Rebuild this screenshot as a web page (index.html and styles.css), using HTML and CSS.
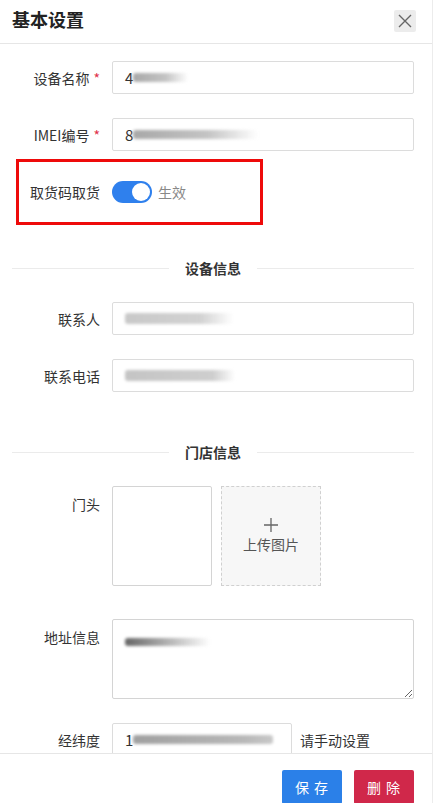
FILE: index.html
```html
<!DOCTYPE html>
<html lang="zh">
<head>
<meta charset="utf-8">
<link rel="stylesheet" href="styles.css">
</head>
<body>
<div class="dialog">
  <div class="header">
    <div class="title">基本设置</div>
    <div class="close">
      <svg width="14" height="14" viewBox="0 0 14 14"><path d="M1 1L13 13M13 1L1 13" stroke="#666" stroke-width="1.4" fill="none"/></svg>
    </div>
  </div>
  <div class="body">
    <div class="row">
      <div class="label">设备名称<span class="req">*</span></div>
      <div class="input"><span class="val">4</span><span class="blur b1"></span></div>
    </div>
    <div class="row">
      <div class="label">IMEI编号<span class="req">*</span></div>
      <div class="input"><span class="val">8</span><span class="blur b2"></span></div>
    </div>
    <div class="row toggle-row">
      <div class="label">取货码取货</div>
      <div class="switch"><span class="knob"></span></div>
      <span class="switch-text">生效</span>
      <div class="mark"></div>
    </div>
    <div class="divider"><span>设备信息</span></div>
    <div class="row">
      <div class="label">联系人</div>
      <div class="input"><span class="blur b3"></span></div>
    </div>
    <div class="row">
      <div class="label">联系电话</div>
      <div class="input"><span class="blur b4"></span></div>
    </div>
    <div class="divider"><span>门店信息</span></div>
    <div class="row top-row pic-row">
      <div class="label">门头</div>
      <div class="pics">
        <div class="pic"></div>
        <div class="upload">
          <svg class="plus" width="14" height="14" viewBox="0 0 14 14"><path d="M7 0V14M0 7H14" stroke="#666" stroke-width="1.3" fill="none"/></svg>
          <span class="up-text">上传图片</span>
        </div>
      </div>
    </div>
    <div class="row top-row addr">
      <div class="label">地址信息</div>
      <div class="textarea"><span class="blur b5"></span></div>
    </div>
    <div class="row">
      <div class="label">经纬度</div>
      <div class="input short"><span class="val">1</span><span class="blur b6"></span></div>
      <span class="hint">请手动设置</span>
    </div>
  </div>
  <div class="footer">
    <button class="btn save">保 存</button>
    <button class="btn del">删 除</button>
  </div>
</div>
</body>
</html>
```
FILE: styles.css
```css
* { box-sizing: border-box; }
html, body { margin: 0; padding: 0; background: #fff; }
body {
  font-family: "Noto Sans CJK SC", "Noto Sans", "Liberation Sans", sans-serif;
  font-size: 14px;
  color: #333;
  width: 438px;
  height: 803px;
  overflow: hidden;
}
.dialog {
  width: 433px;
  height: 803px;
  display: flex;
  flex-direction: column;
  border-right: 1px solid #ececec;
}
.header {
  height: 44px;
  flex: none;
  display: flex;
  align-items: center;
  justify-content: space-between;
  padding: 0 16px 8px 12px;
  border-bottom: 1px solid #e6e6e6;
}
.title { font-size: 18px; font-weight: 600; color: #222; line-height: 24px; margin-top: 2px; }
.close {
  width: 22px; height: 22px;
  background: #ececec;
  border-radius: 2px;
  display: flex; align-items: center; justify-content: center;
  margin-top: 6px;
}
.body {
  flex: 1;
  overflow: hidden;
  padding: 17px 18px 0 12px;
}
.row {
  display: flex;
  align-items: center;
  margin-bottom: 24px;
  position: relative;
}
.label {
  width: 88px;
  flex: none;
  text-align: right;
  margin-right: 12px;
  color: #333;
  white-space: nowrap;
}
.req { color: #e0314b; margin-left: 4px; }
.input {
  flex: 1;
  height: 33px;
  border: 1px solid #dcdcdc;
  border-radius: 2px;
  display: flex;
  align-items: center;
  padding: 0 12px;
  color: #333;
}
.input.short { flex: none; width: 180px; }
.val { font-size: 15px; }
.blur {
  display: inline-block;
  height: 9px;
  background: linear-gradient(90deg, #a8a8a8, #c4c4c4 60%, rgba(200,200,200,0));
  filter: blur(1.6px);
  border-radius: 3px;
}
.b1 { width: 55px; }
.b2 { width: 125px; }
.b3 { width: 108px; height: 11px; background: linear-gradient(90deg, #c8c8c8, #d2d2d2 70%, rgba(220,220,220,0)); }
.b4 { width: 110px; height: 11px; background: linear-gradient(90deg, #c4c4c4, #cecece 80%, rgba(220,220,220,0)); }
.b5 { width: 85px; height: 8px; background: linear-gradient(90deg, #666, #aaa 45%, rgba(220,220,220,0)); }
.b6 { width: 140px; background: linear-gradient(90deg, #a0a0a0, #b8b8b8 80%, #c8c8c8); }
.toggle-row { height: 33px; margin-top: 2px; }
.switch {
  width: 40px; height: 22px;
  border-radius: 11px;
  background: #2f80ed;
  position: relative;
  flex: none;
}
.knob {
  position: absolute;
  right: 2px; top: 2px;
  width: 18px; height: 18px;
  border-radius: 50%;
  background: #fff;
}
.switch-text { margin-left: 6px; color: #888; }
.mark {
  position: absolute;
  left: 4px; top: -16px;
  width: 247px; height: 66px;
  border: 3px solid #ee0a0a;
}
.divider {
  display: flex;
  align-items: center;
  height: 20px;
  margin: 50px 0 24px 0;
  font-weight: 600;
  color: #333;
}
.divider::before, .divider::after {
  content: "";
  flex: 1;
  height: 1px;
  background: #ebebeb;
}
.divider span { padding: 0 16px; }
.top-row { align-items: flex-start; }
.top-row .label { padding-top: 8px; }
.pic-row { margin-top: 1px; }
.pics { display: flex; gap: 9px; }
.pic {
  width: 100px; height: 100px;
  border: 1px solid #d4d4d4;
  border-radius: 2px;
}
.upload {
  width: 100px; height: 100px;
  border: 1px dashed #d0d0d0;
  background: #f7f7f7;
  display: flex;
  flex-direction: column;
  align-items: center;
  justify-content: center;
  color: #555;
}
.plus { display: block; }
.up-text { line-height: 20px; margin-top: 2px; }
.addr { margin-top: 33px; }
.textarea {
  flex: 1;
  height: 80px;
  border: 1px solid #d4d4d4;
  border-radius: 2px;
  padding: 10px 12px;
  resize: vertical;
  overflow: hidden;
}
.hint { margin-left: 8px; color: #333; }
.footer {
  height: 50px;
  flex: none;
  border-top: 1px solid #e6e6e6;
  display: flex;
  justify-content: flex-end;
  align-items: flex-start;
  padding: 16px 18px 0 0;
  gap: 12px;
}
.btn {
  width: 60px;
  height: 34px;
  border: none;
  border-radius: 2px;
  color: #fff;
  font-family: inherit;
  font-size: 14px;
  letter-spacing: 1px;
}
.save { background: #2b80e8; }
.del { background: #d0284a; }
```
